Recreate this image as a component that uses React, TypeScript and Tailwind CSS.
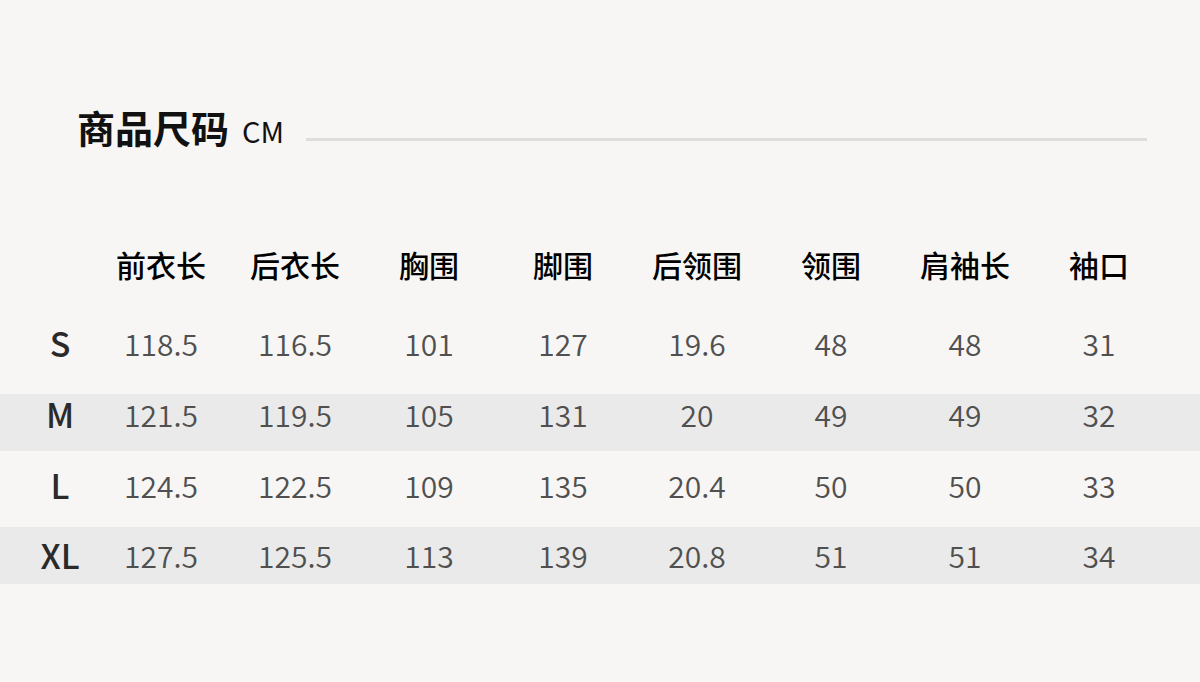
import React from "react";

const headers = ["前衣长", "后衣长", "胸围", "脚围", "后领围", "领围", "肩袖长", "袖口"];

type Row = { size: string; values: string[]; cls: string };

const rows: Row[] = [
  { size: "S", values: ["118.5", "116.5", "101", "127", "19.6", "48", "48", "31"], cls: "h-[94px] pb-[8px]" },
  { size: "M", values: ["121.5", "119.5", "105", "131", "20", "49", "49", "32"], cls: "h-[57px] pb-[17px] bg-[#eaeaea]" },
  { size: "L", values: ["124.5", "122.5", "109", "135", "20.4", "50", "50", "33"], cls: "h-[76px] pb-[8px]" },
  { size: "XL", values: ["127.5", "125.5", "113", "139", "20.8", "51", "51", "34"], cls: "h-[57px] pb-[1px] bg-[#eaeaea]" },
];

const font = { fontFamily: '"Noto Sans CJK SC", "Noto Sans", sans-serif' };

export default function App() {
  return (
    <div className="w-[1200px] h-[682px] bg-[#f7f6f4] overflow-hidden" style={font}>
      <div className="flex items-baseline pt-[108px] pl-[77px]">
        <span className="text-[38px] leading-none font-bold text-[#111111]">商品尺码</span>
        <span className="ml-[13px] text-[29px] leading-none text-[#111111]">CM</span>
        <div className="self-start mt-[30px] ml-[22px] flex-1 mr-[53px] h-[3px] bg-[#dddddd]" />
      </div>

      <div className="mt-[82px] flex flex-col">
        <div className="flex h-[72px] items-center">
          <div className="w-[94px]" />
          {headers.map((h) => (
            <div key={h} className="w-[134px] flex justify-center text-[30px] leading-none font-medium text-[#000000]">
              {h}
            </div>
          ))}
        </div>
        {rows.map((r) => (
          <div key={r.size} className={`flex items-center ${r.cls}`}>
            <div className="w-[94px] pl-[26px] flex justify-center text-[34px] leading-none font-medium text-[#2a2a2a]">
              {r.size}
            </div>
            {r.values.map((v, i) => (
              <div key={i} className="w-[134px] flex justify-center text-[30px] leading-none font-[350] text-[#505050]">
                {v}
              </div>
            ))}
          </div>
        ))}
      </div>
    </div>
  );
}
